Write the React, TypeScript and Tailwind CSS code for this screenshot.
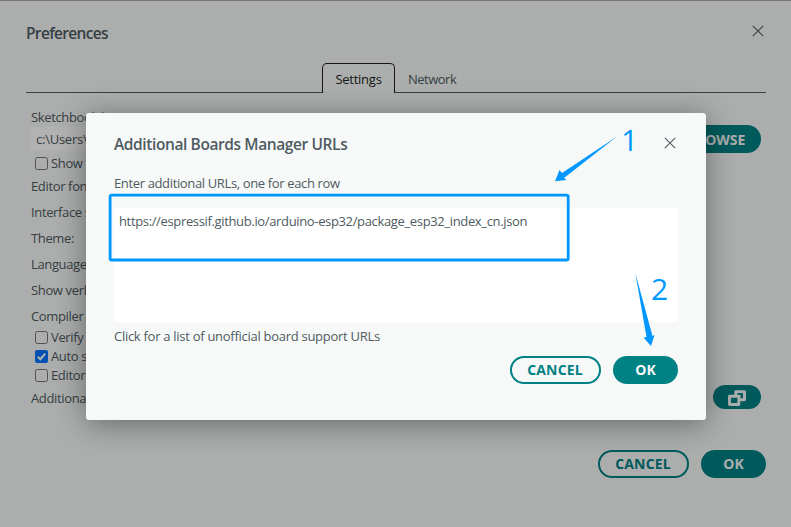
import React from 'react';

const CloseIcon = () => (
  <svg width="12" height="12" viewBox="0 0 12 12" fill="none" stroke="currentColor" strokeWidth="1.1">
    <path d="M.8.8 11.2 11.2M11.2.8.8 11.2" />
  </svg>
);

const Footer = () => (
  <div className="flex justify-end gap-3 text-[14px] font-bold tracking-[0.15px]">
    <button className="h-7 w-[91px] rounded-full border-2 border-[#008184] pr-[1px] leading-6 text-[#008184]">CANCEL</button>
    <button className="h-7 w-[65px] rounded-full bg-[#008184] leading-7 text-[#f7f9f9]">OK</button>
  </div>
);

const Check = ({ label, checked = false }: { label: string; checked?: boolean }) => (
  <div className="flex h-[19px] items-center gap-[3px] pl-1">
    <svg width="13" height="13" viewBox="0 0 13 13" fill="none">
      {checked ? (
        <>
          <rect width="13" height="13" rx="2" fill="#0075ff" />
          <path d="M2.8 6.8 5.3 9.2 10.2 3.6" stroke="#fff" strokeWidth="2" />
        </>
      ) : (
        <rect x=".5" y=".5" width="12" height="12" rx="2" stroke="#767676" />
      )}
    </svg>
    <span className="pt-px">{label}</span>
  </div>
);

const Row = ({ label }: { label: string }) => <div className="h-[26px] leading-[26px]">{label}</div>;

export default function App() {
  return (
    <div className="relative h-[527px] w-[791px] overflow-hidden whitespace-nowrap bg-[#f7f9f9] font-['Open_Sans','Noto_Sans',sans-serif] text-[13px] tracking-[-0.355px] text-[#4e5b61]">
      <div className="flex h-full flex-col border-t border-[#aaaaaa] pl-[26px] pr-[25px]">
        <header className="flex h-[62px] items-center justify-between">
          <h1 className="pt-[3px] text-[15.5px] font-semibold tracking-[-0.67px]">Preferences</h1>
          <span className="pb-[3px] pr-[2px]"><CloseIcon /></span>
        </header>
        <nav className="flex h-[30px] items-stretch border-b border-[#4e5b61] pl-[296px]">
          <div className="-mb-px h-[30px] w-[73px] rounded-t-[5px] border border-b-0 border-[#222] bg-[#f7f9f9] text-center leading-[31px] tracking-[-0.25px] text-[#171e21]">Settings</div>
          <div className="pl-[13px] leading-[33px] tracking-[-0.5px]">Network</div>
        </nav>
        <div className="flex flex-col pl-[5px] pr-[5px] pt-[15px]">
          <div className="h-[19px] leading-[19px]">Sketchbook location:</div>
          <div className="flex h-6 items-center justify-between">
            <div className="h-6 w-[570px] rounded-[2px] bg-white pl-[5px] leading-6 tracking-[-0.25px]">c:\Users\</div>
            <button className="h-7 w-[90px] shrink-0 rounded-full bg-[#008184] text-[14px] font-bold tracking-[-0.1px] text-[#f7f9f9]">BROWSE</button>
          </div>
          <div className="pt-[3px]"><Check label="Show files" /></div>
          <Row label="Editor font size:" />
          <Row label="Interface scale:" />
          <Row label="Theme:" />
          <Row label="Language:" />
          <Row label="Show verbose output" />
          <Row label="Compiler warnings" />
          <div className="-mt-px"><Check label="Verify" /></div>
          <Check label="Auto save" checked />
          <Check label="Editor Quick" />
          <div className="flex h-6 items-center justify-between">
            <span className="pt-[4px]">Additional boards</span>
            <button className="flex h-6 w-12 items-center justify-center rounded-full bg-[#008184]">
              <svg className="mt-px" width="18" height="16" viewBox="0 0 18 16" fill="none" stroke="#f7f9f9" strokeWidth="2.9">
                <path d="M7.800 5V1.600h8.700v8.200h-4.500" strokeLinejoin="round" />
                <path d="M1.500 6.300h9.300v8.200H1.500z" strokeLinejoin="round" />
                <path d="M10 6.200h2.600" strokeWidth="2" />
              </svg>
            </button>
          </div>
        </div>
        <div className="pt-[41px]"><Footer /></div>
      </div>

      <div className="absolute inset-0 flex items-start bg-black/30 pl-[86px] pt-[113px]">
        <section className="flex h-[307px] w-[620px] flex-col rounded-[3px] bg-[#f7f9f9] px-7 shadow-[0_4px_30px_rgba(0,0,0,0.4)]">
          <header className="flex h-[61px] items-center justify-between">
            <h2 className="pt-[2px] text-[15.5px] font-semibold tracking-[-0.4px]">Additional Boards Manager URLs</h2>
            <span className="pb-[2px] pr-[2px]"><CloseIcon /></span>
          </header>
          <div className="h-[34px] leading-[19px] tracking-[-0.36px]">Enter additional URLs, one for each row</div>
          <div className="h-[114px] bg-white pl-[5px] pt-[4px] leading-[19px] tracking-[-0.35px]">https://espressif.github.io/arduino-esp32/package_esp32_index_cn.json</div>
          <div className="h-[34px] leading-[29px] tracking-[-0.28px]">Click for a list of unofficial board support URLs</div>
          <Footer />
        </section>
      </div>

      <svg className="absolute inset-0" width="791" height="527" viewBox="0 0 791 527" fill="#0098ff">
        <rect x="110.100" y="195.100" width="458.100" height="64.900" rx="1.500" fill="none" stroke="#0098ff" strokeWidth="2.8" />
        <path d="M617 136.500 564 178 566.500 180 555 181.200 559.500 170 562 173Z" />
        <path d="M635.300 273 652.500 336 654.500 335 651 346 643.500 337.500 646.500 337Z" />
      </svg>
      <span className="absolute left-[621px] top-[119px] text-[30px] font-normal leading-[41px] text-[#0098ff]">1</span>
      <span className="absolute left-[651px] top-[268px] text-[30px] font-normal leading-[41px] text-[#0098ff]">2</span>
    </div>
  );
}
